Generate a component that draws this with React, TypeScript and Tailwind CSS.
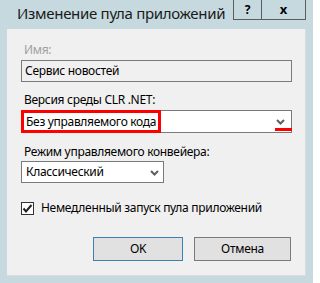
import React from "react";

const font = { fontFamily: '"Noto Sans", "Open Sans", sans-serif' };

function Chevron() {
  return (
    <svg width="9" height="6" viewBox="0 0 9 6" className="block">
      <path d="M1 1 L4.5 4.5 L8 1" fill="none" stroke="#606060" strokeWidth="2" />
    </svg>
  );
}

export default function App() {
  return (
    <div
      className="w-[313px] h-[283px] bg-[#c6d9df] relative overflow-hidden text-black"
      style={font}
    >
      {/* title bar */}
      <div className="h-[29px] flex items-start">
        <div className="pl-[17px] pt-[3px] text-[15px] leading-[20px] tracking-[-0.3px] text-[#1a1a1a] flex-1 whitespace-nowrap">
          Изменение пула приложений
        </div>
        <div className="flex h-[20px] mr-[7px] border border-t-0 border-[#5c5c5c]">
          <div className="w-[28px] flex items-center justify-center border-r border-[#5c5c5c] text-[12px] font-bold leading-none">
            ?
          </div>
          <div className="w-[43px] flex items-center justify-center text-[13px] font-bold leading-none">
            x
          </div>
        </div>
      </div>

      {/* panel */}
      <div className="mx-[7px] h-[247px] bg-[#f0f0f0] border-r border-b border-[#dcdcdc] px-[14px] pt-[13px] text-[12px] leading-[16px] tracking-[-0.3px]">
        <div className="pl-[3px] text-[#a0a0a0]">Имя:</div>
        <div className="mt-[2px] w-[271px] h-[22px] border border-[#7a7a7a] flex items-center pl-[3px]">
          Сервис новостей
        </div>

        <div className="mt-[10px] pl-[3px]">Версия среды CLR .NET:</div>
        <div className="mt-[2px] w-[271px] h-[23px] border border-[#7a7a7a] bg-white relative flex items-center">
          <div className="absolute left-[-1px] top-[-1px] w-[140px] h-[23px] border-[3px] border-[#ff0000]" />
          <span className="pl-[4px] relative">Без управляемого кода</span>
          <div className="absolute right-[6px] top-[8px]">
            <Chevron />
          </div>
          <div className="absolute right-[-1px] top-[17px] w-[17px] h-[3px] bg-[#ff0000]" />
        </div>

        <div className="mt-[11px] pl-[3px]">Режим управляемого конвейера:</div>
        <div className="mt-[1px] w-[143px] h-[22px] border border-[#7a7a7a] bg-white relative flex items-center">
          <span className="pl-[4px]">Классический</span>
          <div className="absolute right-[4px] top-[8px]">
            <Chevron />
          </div>
        </div>

        <div className="mt-[17px] flex items-center h-[16px]">
          <div className="w-[13px] h-[13px] border border-[#333333] bg-white flex items-center justify-center">
            <svg width="11" height="11" viewBox="0 0 11 11">
              <path d="M1.5 5.5 L4 8.5 L9.5 2" fill="none" stroke="#222" strokeWidth="2" />
            </svg>
          </div>
          <span className="ml-[7px]">Немедленный запуск пула приложений</span>
        </div>

        <div className="mt-[21px] flex justify-end gap-[11px]">
          <div className="w-[90px] h-[24px] border border-[#3c7fb1] bg-[#e1e1e1] flex items-center justify-center">
            OK
          </div>
          <div className="w-[97px] h-[24px] border border-[#7a7a7a] bg-[#e1e1e1] flex items-center justify-center">
            Отмена
          </div>
        </div>
      </div>
    </div>
  );
}
